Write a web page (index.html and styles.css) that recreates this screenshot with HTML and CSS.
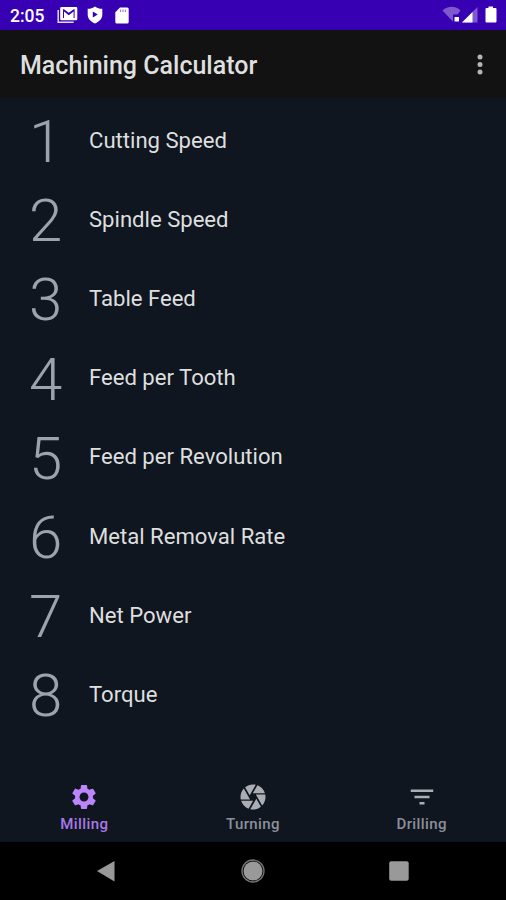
FILE: index.html
```html
<!DOCTYPE html>
<html lang="en">
<head>
  <meta charset="UTF-8">
  <meta name="viewport" content="width=device-width, initial-scale=1.0">
  <title>Machining Calculator</title>
  <link rel="stylesheet" href="styles.css">
</head>
<body>
  <div class="status-bar">
    <span class="clock">2:05</span>
    <svg class="icon-mail" width="21" height="18" viewBox="0 0 21 18">
      <path d="M1.200 4v12.300h15.500" fill="none" stroke="#fff" stroke-width="1.500" opacity=".85"/>
      <path fill="#fff" fill-rule="evenodd" d="M4.500 1h14.500a1.300 1.300 0 0 1 1.300 1.300v10.700a1.300 1.300 0 0 1-1.300 1.300h-14.500a1.300 1.300 0 0 1-1.300-1.300v-10.700a1.300 1.300 0 0 1 1.300-1.300zM6 3.200v8.800h1v-6.400l4.800 3.600 4.800-3.600v6.400h1v-8.800h-.9l-4.900 3.500-4.900-3.500z"/>
    </svg>
    <svg class="icon-shield" width="16" height="18" viewBox="0 0 16 18">
      <path fill="#fff" fill-rule="evenodd" d="M8 .5c2 1.700 4.500 2.300 7.300 2.300v5.700c0 4-2.600 7-7.300 9-4.700-2-7.300-5-7.300-9v-5.700c2.800 0 5.300-.6 7.300-2.300zM5.800 5.600v6l5-3z"/>
    </svg>
    <svg class="icon-card" width="14" height="17" viewBox="0 0 14 17">
      <path fill="#fff" d="M5 .5h7.200a1.500 1.500 0 0 1 1.500 1.500v13a1.500 1.500 0 0 1-1.500 1.500h-10.400a1.500 1.500 0 0 1-1.500-1.500v-9.800z"/>
      <path stroke="#3700b3" stroke-width="1.200" opacity=".5" d="M5.500 2.500v2.400M8 2.500v2.400M10.500 2.500v2.400"/>
    </svg>
    <svg class="icon-signal" width="56" height="18" viewBox="0 0 56 18">
      <path fill="#7f57ce" d="M.5 4.500c5-5 13.500-5 18 0l-3 4h-4.500v7.300z"/>
      <path fill="#fff" d="M12.500 11h4.500v4.500h-4.500z"/>
      <path fill="#7f57ce" d="M35.500 1v15.500h-15.500z"/>
      <path fill="#fff" d="M30.500 6v10.500h-10.500z"/>
      <path fill="#fff" d="M46.500.5h4.500v1.500h2.500a1 1 0 0 1 1 1v12.500a1 1 0 0 1-1 1h-9a1 1 0 0 1-1-1v-12.500a1 1 0 0 1 1-1h2z"/>
    </svg>
  </div>

  <header class="app-bar">
    <h1>Machining Calculator</h1>
    <svg class="icon-more" width="8" height="24" viewBox="0 0 8 24">
      <circle cx="4" cy="4" r="2.500"/>
      <circle cx="4" cy="11.500" r="2.500"/>
      <circle cx="4" cy="19" r="2.500"/>
    </svg>
  </header>

  <ul class="list">
    <li><span class="number">1</span>Cutting Speed</li>
    <li><span class="number">2</span>Spindle Speed</li>
    <li><span class="number">3</span>Table Feed</li>
    <li><span class="number">4</span>Feed per Tooth</li>
    <li><span class="number">5</span>Feed per Revolution</li>
    <li><span class="number">6</span>Metal Removal Rate</li>
    <li><span class="number">7</span>Net Power</li>
    <li><span class="number">8</span>Torque</li>
  </ul>

  <nav class="tabs">
    <a class="tab active">
      <svg width="30" height="30" viewBox="0 0 24 24">
        <path d="M19.140 12.940c.04-.3.060-.61.060-.94 0-.32-.02-.64-.07-.94l2.030-1.580c.18-.14.230-.41.120-.61l-1.920-3.320c-.12-.22-.37-.29-.59-.22l-2.390.96c-.5-.38-1.030-.7-1.620-.94l-.36-2.540c-.04-.24-.24-.41-.48-.41h-3.840c-.24 0-.43.17-.47.41l-.36 2.540c-.59.24-1.130.57-1.620.94l-2.390-.96c-.22-.08-.47 0-.59.22L2.740 8.870c-.12.210-.08.470.12.610l2.030 1.580c-.05.3-.09.630-.09.940s.02.640.07.940l-2.030 1.580c-.18.140-.23.410-.12.610l1.920 3.320c.12.220.37.290.59.220l2.390-.96c.5.380 1.030.7 1.620.94l.36 2.540c.05.240.24.410.48.410h3.840c.24 0 .44-.17.470-.41l.36-2.540c.59-.24 1.130-.56 1.620-.94l2.390.96c.22.080.47 0 .59-.22l1.920-3.320c.12-.22.070-.47-.12-.61l-2.010-1.580zM12 15.600c-1.980 0-3.600-1.620-3.600-3.600s1.620-3.600 3.600-3.600 3.600 1.620 3.600 3.600-1.620 3.600-3.600 3.600z"/>
      </svg>
      <span>Milling</span>
    </a>
    <a class="tab">
      <svg width="30" height="30" viewBox="0 0 24 24">
        <path d="M9.400 10.500l4.770-8.260C13.470 2.090 12.750 2 12 2c-2.400 0-4.600.85-6.320 2.250l3.660 6.350.06-.1zM21.540 9c-.92-2.920-3.150-5.260-6-6.340L11.880 9h9.660zm.26 1h-7.490l.29.500 4.760 8.250C21 16.970 22 14.610 22 12c0-.69-.07-1.350-.2-2zM8.540 12l-3.900-6.750C3.010 7.030 2 9.390 2 12c0 .69.070 1.350.2 2h7.490l-1.150-2zm-6.080 3c.92 2.920 3.150 5.260 6 6.340L12.120 15H2.460zm11.270 0l-3.900 6.760c.7.150 1.420.24 2.170.24 2.400 0 4.600-.85 6.320-2.250l-3.660-6.350-.93 1.600z"/>
      </svg>
      <span>Turning</span>
    </a>
    <a class="tab">
      <svg width="30" height="30" viewBox="0 0 24 24">
        <path d="M10 18h4v-2h-4v2zM3 6v2h18V6H3zm3 7h12v-2H6v2z"/>
      </svg>
      <span>Drilling</span>
    </a>
  </nav>

  <div class="system-nav">
    <svg width="22" height="24" viewBox="0 0 22 24">
      <path fill="#999" d="M2 12L19.500 2v20.500z"/>
    </svg>
    <svg width="26" height="26" viewBox="0 0 26 26">
      <circle cx="13" cy="13" r="11" fill="none" stroke="#777" stroke-width="1.300"/>
      <circle cx="13" cy="13" r="9.500" fill="#999"/>
    </svg>
    <svg width="22" height="22" viewBox="0 0 22 22">
      <rect x="1.200" y="1.200" width="19.500" height="19.500" rx="2" fill="#999"/>
    </svg>
  </div>
</body>
</html>
```
FILE: styles.css
```css
* {
  box-sizing: border-box;
}
body {
  display: flex;
  flex-direction: column;
  height: 900px;
  margin: 0;
  font-family: Roboto, sans-serif;
  background-color: #101620;
  color: #dedfdf;
}
.status-bar {
  display: flex;
  align-items: center;
  height: 30px;
  padding: 0 8px 0 10px;
  background-color: #3700b3;
  color: #fff;
}
.clock {
  width: 47px;
  padding-top: 1px;
  font-size: 17.500px;
  font-weight: 500;
}
.icon-shield {
  margin-left: 9px;
}
.icon-card {
  margin-left: 12px;
}
.icon-signal {
  margin-left: auto;
}
.app-bar {
  display: flex;
  align-items: center;
  justify-content: space-between;
  height: 68px;
  padding: 2px 22px 0 20px;
  background-color: #121212;
}
h1 {
  margin: 0;
  font-size: 25px;
  font-weight: 500;
}
.icon-more {
  fill: #b5b5b5;
}
.list {
  flex: 1;
  margin: 0;
  padding: 2px 0 0;
  list-style: none;
}
.list li {
  display: flex;
  align-items: center;
  height: 79.200px;
  font-size: 22.100px;
}
.number {
  width: 89px;
  padding: 4px 0 0 29px;
  font-size: 60px;
  font-weight: 300;
  line-height: 75px;
  color: #9da2ad;
}
.tabs {
  display: flex;
  height: 70px;
}
.tab {
  display: flex;
  flex: 1;
  flex-direction: column;
  align-items: center;
  padding-top: 10px;
  font-size: 15px;
  font-weight: 500;
  line-height: 24px;
  letter-spacing: 0.4px;
  color: #8c9099;
}
.tab svg {
  fill: #abadb5;
}
.tab.active {
  color: #a878e8;
}
.tab.active svg {
  fill: #bb86fc;
}
.system-nav {
  display: flex;
  align-items: center;
  justify-content: space-between;
  height: 58px;
  padding: 0 96px 0 95px;
  background-color: #000;
}
```
